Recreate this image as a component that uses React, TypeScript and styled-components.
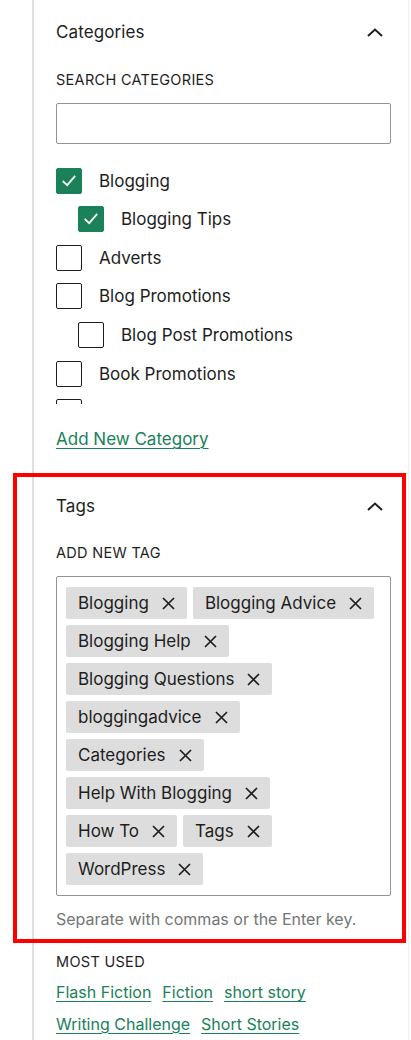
import React from 'react';
import styled, { createGlobalStyle } from 'styled-components';

const GlobalStyle = createGlobalStyle`
  html, body { margin: 0; padding: 0; background: #fff; }
  body {
    font-family: Inter, "Noto Sans", sans-serif;
    color: #1e1e1e;
    -webkit-font-smoothing: antialiased;
  }
  * { box-sizing: border-box; }
`;

const GREEN = '#1a8159';

const Sidebar = styled.div`
  margin-left: 32px;
  width: 377px;
  min-height: 1040px;
  border-left: 2px solid #e0e0e0;
  border-right: 1px solid #efefef;
`;

const Panel = styled.section<{ $borderTop?: boolean }>`
  position: relative;
  padding: 16px 17px 22px 22px;
  border-top: ${(p) => (p.$borderTop ? '1px solid #e0e0e0' : 'none')};
`;

const Header = styled.div`
  display: flex;
  align-items: center;
  justify-content: space-between;
  height: 32px;
`;

const Title = styled.h2`
  margin: 0;
  font-size: 17px;
  line-height: 32px;
  font-weight: 400;
  letter-spacing: 0.1px;
`;

const ChevronBox = styled.span`
  width: 32px;
  height: 32px;
  display: flex;
  align-items: center;
  justify-content: center;
`;

const Label = styled.div<{ $top: number }>`
  margin-top: ${(p) => p.$top}px;
  font-size: 14.5px;
  line-height: 20px;
  font-weight: 400;
  text-transform: uppercase;
  letter-spacing: 0.3px;
`;

const SearchInput = styled.div`
  margin-top: 13px;
  height: 41px;
  border: 1px solid #949494;
  border-radius: 2px;
`;

const CheckList = styled.div`
  margin-top: 23.5px;
  height: 236.5px;
  overflow: hidden;
  display: flex;
  flex-direction: column;
  gap: 12.63px;
`;

const CheckRow = styled.label<{ $level: number }>`
  display: flex;
  align-items: center;
  gap: 17px;
  min-height: 26px;
  padding-left: ${(p) => p.$level * 22}px;
  font-size: 17px;
  line-height: 26px;
  flex-shrink: 0;
`;

const Box = styled.span<{ $checked: boolean }>`
  width: 26px;
  height: 26px;
  flex-shrink: 0;
  border-radius: 2px;
  border: 1.5px solid ${(p) => (p.$checked ? GREEN : '#1e1e1e')};
  background: ${(p) => (p.$checked ? GREEN : '#fff')};
  display: flex;
  align-items: center;
  justify-content: center;
`;

const GreenLink = styled.a<{ $size?: number }>`
  color: ${GREEN};
  font-size: ${(p) => p.$size ?? 17}px;
  line-height: 24px;
  text-decoration: underline;
  text-underline-offset: 3px;
  text-decoration-thickness: 1px;
  cursor: pointer;
`;

const AddRow = styled.div`
  margin-top: 23px;
  line-height: 24px;
`;

const Highlighted = styled.div`
  position: relative;
`;

const RedFrame = styled.div`
  position: absolute;
  top: -1px;
  left: -21px;
  width: 393px;
  height: 470px;
  border: 4px solid #ff0000;
  pointer-events: none;
`;

const TagBox = styled.div`
  margin-top: 13px;
  border: 1px solid #949494;
  border-radius: 2px;
  padding: 10px 9px 10px 9px;
  display: flex;
  flex-wrap: wrap;
  gap: 6px;
`;

const Chip = styled.span`
  display: inline-flex;
  align-items: center;
  gap: 13px;
  height: 32px;
  padding: 0 12px;
  background: #dddddd;
  border-radius: 2px;
  font-size: 17px;
  line-height: 32px;
  white-space: nowrap;
`;

const TokenInput = styled.span`
  flex: 1;
  min-width: 60px;
  height: 32px;
`;

const Help = styled.p`
  margin: 13px 0 0;
  font-size: 16px;
  line-height: 20px;
  color: #757575;
`;

const MostUsedLabel = styled.div`
  margin-top: 23px;
  font-size: 14.5px;
  line-height: 20px;
  font-weight: 400;
  text-transform: uppercase;
  letter-spacing: 0.3px;
`;

const LinkCloud = styled.div`
  margin-top: 8px;
  display: flex;
  flex-wrap: wrap;
  column-gap: 11px;
  row-gap: 7.6px;
`;

const Chevron = () => (
  <svg width="16" height="9" viewBox="0 0 16 9" fill="none">
    <path d="M1 8 L8 1.6 L15 8" stroke="#1e1e1e" strokeWidth="2" />
  </svg>
);

const Check = () => (
  <svg width="18" height="18" viewBox="0 0 18 18" fill="none">
    <path d="M3.4 9.6 L7.2 13.2 L14.6 4.6" stroke="#fff" strokeWidth="1.8" strokeLinecap="square" />
  </svg>
);

const CloseX = () => (
  <svg width="13" height="13" viewBox="0 0 13 13" fill="none">
    <path d="M1 1 L12 12 M12 1 L1 12" stroke="#1e1e1e" strokeWidth="1.7" />
  </svg>
);

const categories = [
  { name: 'Blogging', level: 0, checked: true },
  { name: 'Blogging Tips', level: 1, checked: true },
  { name: 'Adverts', level: 0, checked: false },
  { name: 'Blog Promotions', level: 0, checked: false },
  { name: 'Blog Post Promotions', level: 1, checked: false },
  { name: 'Book Promotions', level: 0, checked: false },
  { name: '', level: 0, checked: false },
];

const tags = [
  'Blogging',
  'Blogging Advice',
  'Blogging Help',
  'Blogging Questions',
  'bloggingadvice',
  'Categories',
  'Help With Blogging',
  'How To',
  'Tags',
  'WordPress',
];

const mostUsed = ['Flash Fiction', 'Fiction', 'short story', 'Writing Challenge', 'Short Stories'];

export default function App() {
  return (
    <>
      <GlobalStyle />
      <Sidebar>
        <Panel>
          <Header>
            <Title>Categories</Title>
            <ChevronBox>
              <Chevron />
            </ChevronBox>
          </Header>
          <Label $top={22}>Search Categories</Label>
          <SearchInput />
          <CheckList>
            {categories.map((c, i) => (
              <CheckRow key={i} $level={c.level}>
                <Box $checked={c.checked}>{c.checked && <Check />}</Box>
                {c.name}
              </CheckRow>
            ))}
          </CheckList>
          <AddRow>
            <GreenLink>Add New Category</GreenLink>
          </AddRow>
        </Panel>
        <Panel $borderTop>
          <RedFrame />
          <Highlighted>
            <Header>
              <Title>Tags</Title>
              <ChevronBox>
                <Chevron />
              </ChevronBox>
            </Header>
            <Label $top={21}>Add New Tag</Label>
            <TagBox>
              {tags.map((t) => (
                <Chip key={t}>
                  {t}
                  <CloseX />
                </Chip>
              ))}
              <TokenInput />
            </TagBox>
            <Help>Separate with commas or the Enter key.</Help>
          </Highlighted>
          <MostUsedLabel>Most Used</MostUsedLabel>
          <LinkCloud>
            {mostUsed.map((m) => (
              <GreenLink key={m} $size={16}>
                {m}
              </GreenLink>
            ))}
          </LinkCloud>
        </Panel>
      </Sidebar>
    </>
  );
}
